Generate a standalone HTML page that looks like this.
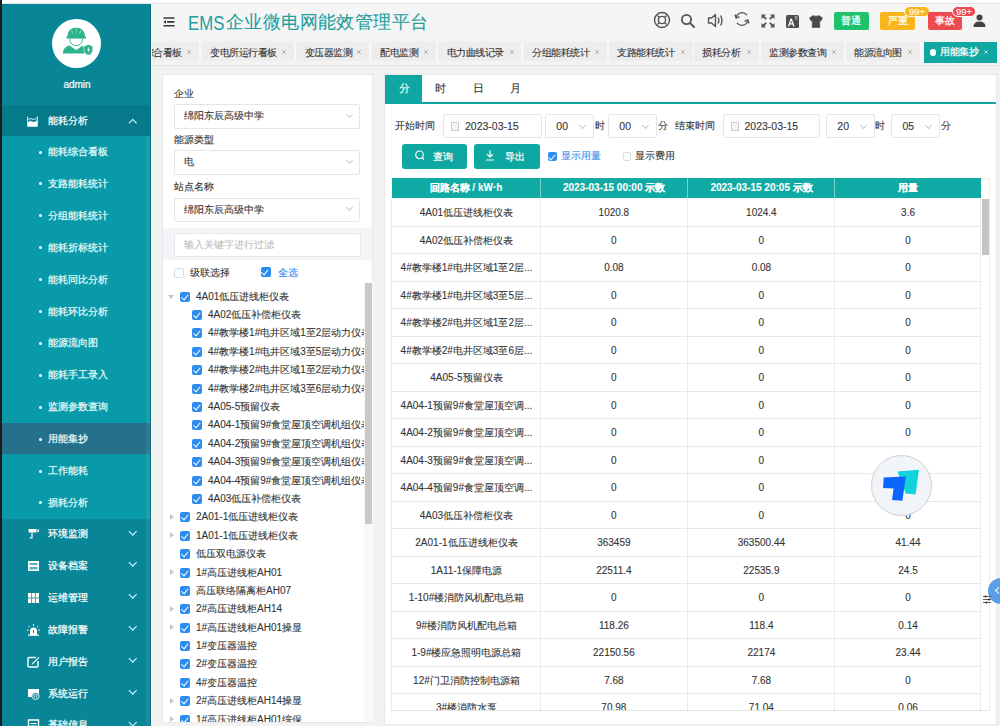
<!DOCTYPE html><html><head><meta charset="utf-8"><style>
*{box-sizing:border-box;margin:0;padding:0}
html,body{width:1000px;height:726px;overflow:hidden;background:#f2f2f2;font-family:"Liberation Sans",sans-serif;font-size:10px;color:#333}
.a{position:absolute}
.t{position:absolute;white-space:nowrap;line-height:12px;-webkit-text-stroke:0.1px currentColor}
.w{-webkit-text-stroke:0.22px currentColor}
#lstrip{left:0;top:0;width:2px;height:726px;background:#1d1d1d}
#top{left:2px;top:0;width:998px;height:4px;background:#fff;border-bottom:1px solid #e2e2e2}
#side{left:2px;top:4px;width:149px;height:722px;background:#088596;overflow:hidden}
.sb{position:absolute;left:0;width:149px}
.mi{color:#fff;font-size:10px;-webkit-text-stroke:0.22px currentColor}
.sub{color:#eafafa;font-size:10px;-webkit-text-stroke:0.22px currentColor}
.dot{position:absolute;width:3px;height:3px;border-radius:50%;background:#fff}
.chev{position:absolute;width:6px;height:6px;border-left:1.2px solid #dff;border-top:1.2px solid #dff}
#hdr{left:151px;top:4px;width:849px;height:34px;background:#f5f5f5}
#tabs{left:151px;top:38px;width:849px;height:28px;background:#f3f3f3;border-bottom:1px solid #e4e4e4}
.tab{position:absolute;top:4px;height:19px;background:#ededed;border-right:2px solid #f8f8f8;font-size:9.5px;color:#333;line-height:22px}
.x{position:absolute;top:0;font-size:8px;color:#999;line-height:22px}
#fp{left:162px;top:74px;width:211px;height:649px;background:#fff;border:1px solid #e8e8e8}
.lbl{font-size:10px;color:#333}
.sel{position:absolute;background:#fff;border:1px solid #e6e6e6;border-radius:2px}
.cb{position:absolute;width:10px;height:10px;border-radius:2px;background:#2d8cf0}
.cb:after{content:"";position:absolute;left:2.5px;top:1px;width:3px;height:5.5px;border-right:1.5px solid #fff;border-bottom:1.5px solid #fff;transform:rotate(40deg)}
.cbo{position:absolute;width:10px;height:10px;border-radius:2px;background:#fff;border:1px solid #dcdcdc}
.tr{font-size:10px;color:#333}
#rp{left:384px;top:74px;width:613px;height:650.5px;background:#fff;border:1px solid #e8e8e8}
.btn{position:absolute;background:#0ea7a1;border-radius:3px;color:#fff}
table{border-collapse:collapse}
</style></head><body><div id="lstrip" class="a"></div><div id="top" class="a"></div><div id="side" class="a"><div class="a" style="left:49.5px;top:14.5px;width:49px;height:49px;border-radius:50%;background:#fff"></div><svg class="a" style="left:0;top:0" width="149" height="100" viewBox="2 4 149 100"><path d="M67.2 37.2 Q67.5 27.8 76.2 27.4 Q84.8 27.8 85.2 37.2 Z" fill="#2db38c"/><path d="M66.5 36.6 H86 V38.6 H66.5 Z" fill="#2db38c"/><path d="M76.2 27.6 V33 M71.5 30 L73 34 M81 30 L79.5 34" stroke="#bfeedd" stroke-width="0.6"/><path d="M69.8 38.8 Q70 45.3 76.2 45.6 Q82.4 45.3 82.6 38.8" fill="none" stroke="#2db38c" stroke-width="0.9"/><path d="M62.8 53.4 Q63 47.2 69.5 45.6 L76.2 50 L82.5 45.8 Q84 46.5 84.2 48 L84.2 53.4 Z" fill="#2db38c"/><path d="M72 46.5 L76.2 49.5 L80.4 46.5" fill="none" stroke="#e9fbf3" stroke-width="0.7"/><path d="M83.8 46.2 L88.3 44.4 L92.8 46.2 V50 Q92.6 54 88.3 55.3 Q84 54 83.8 50 Z" fill="#2db38c" stroke="#fff" stroke-width="0.5"/><path d="M89 46.5 L87 50.2 L88.5 50.2 L87.6 53.5 L90 49.3 L88.6 49.3 Z" fill="#fff"/></svg><div class="t" style="left:0.5px;width:149px;top:73.5px;text-align:center;color:#fff;font-size:10px;line-height:14px;-webkit-text-stroke:0.2px #fff">admin</div><div class="sb" style="top:101px;height:31px;background:#06798b"></div><div class="sb" style="top:132px;height:382.5px;background:#089aa8"></div><div class="sb" style="top:419.2px;height:31.2px;background:#25708b"></div><div class="sb" style="top:514.5px;height:208px;background:#088596"></div><div class="a" style="left:144.2px;top:132px;width:3.6px;height:590px;background:rgba(255,255,255,0.07)"></div><div class="a" style="left:147.8px;top:0;width:1.2px;height:722px;background:#0a6e7c"></div><svg class="a" style="left:24.9px;top:111.9px" width="11" height="11" viewBox="0 0 11 11"><path d="M0.6 0.5 V10.4 H10.4 V0.5" fill="none" stroke="#cfeff2" stroke-width="1"/><path d="M1 4 Q3 1.5 5 3 T10 2" fill="none" stroke="#dff" stroke-width="0.9"/><path d="M1 10 V6.5 Q3 4.3 5.2 5.6 T10 4.6 V10 Z" fill="#fff"/></svg><div class="t mi" style="left:46px;top:111px">能耗分析</div><div class="chev" style="left:128px;top:116px;width:5.5px;height:5.5px;transform:rotate(45deg)"></div><div class="dot" style="left:36.5px;top:146.5px"></div><div class="t sub" style="left:46px;top:142.0px">能耗综合看板</div><div class="dot" style="left:36.5px;top:178.4px"></div><div class="t sub" style="left:46px;top:173.9px">支路能耗统计</div><div class="dot" style="left:36.5px;top:210.3px"></div><div class="t sub" style="left:46px;top:205.8px">分组能耗统计</div><div class="dot" style="left:36.5px;top:242.2px"></div><div class="t sub" style="left:46px;top:237.7px">能耗折标统计</div><div class="dot" style="left:36.5px;top:274.1px"></div><div class="t sub" style="left:46px;top:269.6px">能耗同比分析</div><div class="dot" style="left:36.5px;top:306.0px"></div><div class="t sub" style="left:46px;top:301.5px">能耗环比分析</div><div class="dot" style="left:36.5px;top:337.9px"></div><div class="t sub" style="left:46px;top:333.4px">能源流向图</div><div class="dot" style="left:36.5px;top:369.8px"></div><div class="t sub" style="left:46px;top:365.3px">能耗手工录入</div><div class="dot" style="left:36.5px;top:401.7px"></div><div class="t sub" style="left:46px;top:397.2px">监测参数查询</div><div class="dot" style="left:36.5px;top:433.6px"></div><div class="t sub" style="left:46px;top:429.1px">用能集抄</div><div class="dot" style="left:36.5px;top:465.5px"></div><div class="t sub" style="left:46px;top:461.0px">工作能耗</div><div class="dot" style="left:36.5px;top:497.4px"></div><div class="t sub" style="left:46px;top:492.9px">损耗分析</div><svg class="a" style="left:25px;top:524.0px" width="13" height="12" viewBox="0 0 13 12"><path d="M1.5 1 H9 V4.5 H1.5 Z" fill="#fff"/><path d="M10 1 V4.5 M11.5 1.5 V4" stroke="#fff" stroke-width="1"/><path d="M5 4.5 V9.5 M2.5 10 H5.5" stroke="#fff" stroke-width="1.2"/></svg><div class="t mi" style="left:46px;top:524.0px">环境监测</div><div class="chev" style="left:127.5px;top:524.5px;width:5.5px;height:5.5px;transform:rotate(225deg)"></div><svg class="a" style="left:25px;top:555.9px" width="13" height="12" viewBox="0 0 13 12"><path d="M1 1 H12 V11 H1 Z" fill="#fff"/><path d="M2.5 3 H10.5 V5 H2.5 Z M2.5 7 H10.5 V9.5 H2.5 Z" fill="#5bb3be"/></svg><div class="t mi" style="left:46px;top:555.9px">设备档案</div><div class="chev" style="left:127.5px;top:556.4px;width:5.5px;height:5.5px;transform:rotate(225deg)"></div><svg class="a" style="left:25px;top:587.8px" width="13" height="12" viewBox="0 0 13 12"><path d="M1 1 H12 V11 H1 Z" fill="#fff"/><path d="M4.6 1 V11 M8.4 1 V11 M1 6 H12" stroke="#3aa0ae" stroke-width="1"/></svg><div class="t mi" style="left:46px;top:587.8px">运维管理</div><div class="chev" style="left:127.5px;top:588.3px;width:5.5px;height:5.5px;transform:rotate(225deg)"></div><svg class="a" style="left:25px;top:619.7px" width="13" height="12" viewBox="0 0 13 12"><path d="M3 11 V7 Q3 3.5 6.5 3.5 Q10 3.5 10 7 V11 Z" fill="#fff"/><path d="M1 11.2 H12" stroke="#fff" stroke-width="1.2"/><path d="M6.5 0 V2 M1.5 2 L2.8 3.3 M11.5 2 L10.2 3.3 M0 6 H1.6 M11.4 6 H13" stroke="#fff" stroke-width="1"/><path d="M6.5 6 V9" stroke="#1a8896" stroke-width="1"/></svg><div class="t mi" style="left:46px;top:619.7px">故障报警</div><div class="chev" style="left:127.5px;top:620.2px;width:5.5px;height:5.5px;transform:rotate(225deg)"></div><svg class="a" style="left:25px;top:651.6px" width="13" height="12" viewBox="0 0 13 12"><path d="M9 1.5 H2 Q1 1.5 1 2.5 V10 Q1 11 2 11 H10 Q11 11 11 10 V5" fill="none" stroke="#fff" stroke-width="1.4"/><path d="M5 7.5 L11.5 1 L12.3 1.8 L5.8 8.3 L4.6 8.7 Z" fill="#fff"/></svg><div class="t mi" style="left:46px;top:651.6px">用户报告</div><div class="chev" style="left:127.5px;top:652.1px;width:5.5px;height:5.5px;transform:rotate(225deg)"></div><svg class="a" style="left:25px;top:683.5px" width="13" height="12" viewBox="0 0 13 12"><path d="M1 1 H12 V9 H1 Z" fill="#fff"/><circle cx="8.5" cy="8" r="3.6" fill="#2b9aa8" stroke="#e6fbff" stroke-width="0.8"/><path d="M6.8 8 A1.7 1.7 0 0 1 10.2 8 M7.6 9.5 V8.2 M9.4 9.5 V8" stroke="#fff" stroke-width="0.6" fill="none"/></svg><div class="t mi" style="left:46px;top:683.5px">系统运行</div><div class="chev" style="left:127.5px;top:684.0px;width:5.5px;height:5.5px;transform:rotate(225deg)"></div><svg class="a" style="left:25px;top:715.4px" width="13" height="12" viewBox="0 0 13 12"><path d="M1.5 1 H11.5 V11 H1.5 Z" fill="none" stroke="#fff" stroke-width="1.4"/><path d="M3.5 4.5 H9.5 M3.5 7 H9.5" stroke="#fff" stroke-width="1.2"/></svg><div class="t mi" style="left:46px;top:715.4px">基础信息</div><div class="chev" style="left:127.5px;top:715.9px;width:5.5px;height:5.5px;transform:rotate(225deg)"></div></div><div id="hdr" class="a"></div><div class="a" style="left:151px;top:4px;width:1px;height:722px;background:#fdfdfd;z-index:5"></div><svg class="a" style="left:163px;top:16.6px" width="12" height="10" viewBox="0 0 12 10"><path d="M0.5 1 H11.5 M4 4.9 H11.5 M0.5 8.8 H11.5" stroke="#3a3a3a" stroke-width="1.6"/><path d="M0.3 4.9 L3 3 L3 6.8 Z" fill="#3a3a3a"/></svg><div class="t" style="left:187.5px;top:11.5px;font-size:19.5px;line-height:22px;color:#239e9f;-webkit-text-stroke:0;transform:scaleX(0.86);transform-origin:0 0">EMS</div><div class="t" style="left:226px;top:10.5px;font-size:18px;line-height:22px;color:#239e9f;-webkit-text-stroke:0.1px currentColor;letter-spacing:0.4px">企业微电网能效管理平台</div><svg class="a" style="left:653px;top:11px" width="18" height="18" viewBox="0 0 18 18"><circle cx="9" cy="9" r="7.5" fill="none" stroke="#555" stroke-width="1.4"/><circle cx="9" cy="9" r="3.6" fill="none" stroke="#555" stroke-width="1.4"/><path d="M4.5 4.5 L6.4 6.4 M13.5 4.5 L11.6 6.4 M4.5 13.5 L6.4 11.6 M13.5 13.5 L11.6 11.6" stroke="#555" stroke-width="1.4"/></svg><svg class="a" style="left:680px;top:13px" width="16" height="16" viewBox="0 0 16 16"><circle cx="6.5" cy="6.5" r="4.6" fill="none" stroke="#555" stroke-width="1.8"/><path d="M10 10 L14 14" stroke="#555" stroke-width="2" stroke-linecap="round"/></svg><svg class="a" style="left:707px;top:13px" width="17" height="15" viewBox="0 0 17 15"><path d="M1.5 5 H4.5 L8.5 1.5 V13.5 L4.5 10 H1.5 Z" fill="none" stroke="#555" stroke-width="1.4" stroke-linejoin="round"/><path d="M11 4.5 Q12.8 7.5 11 10.5 M13.5 2.5 Q16.5 7.5 13.5 12.5" fill="none" stroke="#555" stroke-width="1.4"/></svg><svg class="a" style="left:734px;top:11px" width="16" height="16" viewBox="0 0 16 16"><path d="M2.2 6.5 A6 6 0 0 1 13 4.2" fill="none" stroke="#555" stroke-width="1.3"/><path d="M13.8 9.5 A6 6 0 0 1 3 11.8" fill="none" stroke="#555" stroke-width="1.3"/><path d="M1 3.5 L2.2 7.2 L5.5 5.6" fill="none" stroke="#555" stroke-width="1.3"/><path d="M15 12.5 L13.8 8.8 L10.5 10.4" fill="none" stroke="#555" stroke-width="1.3"/></svg><svg class="a" style="left:760.5px;top:14px" width="14" height="14" viewBox="0 0 14 14"><path d="M0.5 0.5 H5 L0.5 5 Z M13.5 0.5 V5 L9 0.5 Z M0.5 13.5 V9 L5 13.5 Z M13.5 13.5 H9 L13.5 9 Z" fill="#555"/><path d="M2 2 L5.2 5.2 M12 2 L8.8 5.2 M2 12 L5.2 8.8 M12 12 L8.8 8.8" stroke="#555" stroke-width="1.8"/></svg><svg class="a" style="left:786px;top:14.5px" width="13" height="13" viewBox="0 0 13 13"><rect x="0" y="0" width="13" height="13" rx="1.5" fill="#4d4d4d"/><path d="M1.8 11.5 L4.6 3.6 H5.8 L8.6 11.5 H7.2 L6.5 9.4 H3.9 L3.2 11.5 Z M4.3 8.2 H6.1 L5.2 5.4 Z" fill="#fff"/><path d="M8.6 1.8 H11.6 M10.1 1.2 V2.5 M8.9 4.8 Q10.2 3.8 11.4 2.4 M9.4 2.6 Q10.4 4.2 11.8 4.9" stroke="#ccc" stroke-width="0.7" fill="none"/></svg><svg class="a" style="left:809px;top:15px" width="14" height="13" viewBox="0 0 14 13"><path d="M4.3 0.5 Q7 2.2 9.7 0.5 L13.5 2.8 L12 6 L10.8 5.6 V12.5 H3.2 V5.6 L2 6 L0.5 2.8 Z" fill="#4a4a4a" stroke="#4a4a4a" stroke-width="0.6" stroke-linejoin="round"/></svg><div class="a" style="left:833.5px;top:11.7px;width:35px;height:18px;background:#1ec26b;border-radius:2px"></div><div class="t" style="left:833.5px;width:35px;text-align:center;top:14.5px;color:#fff;font-size:10px;-webkit-text-stroke:0.22px #fff">普通</div><div class="a" style="left:880.3px;top:11.7px;width:34.5px;height:18px;background:#f8b61c;border-radius:2px"></div><div class="t" style="left:880.3px;width:34.5px;text-align:center;top:14.5px;color:#fff;font-size:10px;-webkit-text-stroke:0.22px #fff">严重</div><div class="a" style="left:904px;top:5.8px;width:26px;height:11.5px;background:#f8b61c;border-radius:6px;border:1px solid #fff"></div><div class="t" style="left:904px;width:26px;text-align:center;top:5.8px;color:#fff;font-size:9.5px;line-height:11.5px">99+</div><div class="a" style="left:928px;top:11.7px;width:33.5px;height:18px;background:#ee4b4f;border-radius:2px"></div><div class="t" style="left:928px;width:33.5px;text-align:center;top:14.5px;color:#fff;font-size:10px;-webkit-text-stroke:0.22px #fff">事故</div><div class="a" style="left:951.8px;top:5.8px;width:24.5px;height:11.5px;background:#ee4b4f;border-radius:6px;border:1px solid #fff"></div><div class="t" style="left:951.8px;width:24.5px;text-align:center;top:5.8px;color:#fff;font-size:9.5px;line-height:11.5px">99+</div><svg class="a" style="left:973px;top:14px" width="13" height="13" viewBox="0 0 13 13"><circle cx="6.5" cy="3.5" r="3" fill="#444"/><path d="M0.5 13 Q0.5 7.5 6.5 7.5 Q12.5 7.5 12.5 13 Z" fill="#444"/></svg><div id="tabs" class="a"></div><div class="a" style="left:151px;top:38px;width:772.7px;height:28px;overflow:hidden"><div class="tab" style="left:-15.9px;width:66.0px"></div><div class="t" style="left:-7.4px;top:8.5px;font-size:10px;letter-spacing:-0.5px;color:#333">综合看板</div><svg class="a" style="left:36.1px;top:11.8px" width="4" height="4" viewBox="0 0 4 4"><path d="M0.3 0.3 L3.7 3.7 M3.7 0.3 L0.3 3.7" stroke="#9a9a9a" stroke-width="0.8"/></svg><div class="tab" style="left:50.5px;width:94.5px"></div><div class="t" style="left:59.0px;top:8.5px;font-size:10px;letter-spacing:-0.5px;color:#333">变电所运行看板</div><svg class="a" style="left:131.0px;top:11.8px" width="4" height="4" viewBox="0 0 4 4"><path d="M0.3 0.3 L3.7 3.7 M3.7 0.3 L0.3 3.7" stroke="#9a9a9a" stroke-width="0.8"/></svg><div class="tab" style="left:145.1px;width:74.9px"></div><div class="t" style="left:153.6px;top:8.5px;font-size:10px;letter-spacing:-0.5px;color:#333">变压器监测</div><svg class="a" style="left:206.0px;top:11.8px" width="4" height="4" viewBox="0 0 4 4"><path d="M0.3 0.3 L3.7 3.7 M3.7 0.3 L0.3 3.7" stroke="#9a9a9a" stroke-width="0.8"/></svg><div class="tab" style="left:220.9px;width:66.1px"></div><div class="t" style="left:229.4px;top:8.5px;font-size:10px;letter-spacing:-0.5px;color:#333">配电监测</div><svg class="a" style="left:273.0px;top:11.8px" width="4" height="4" viewBox="0 0 4 4"><path d="M0.3 0.3 L3.7 3.7 M3.7 0.3 L0.3 3.7" stroke="#9a9a9a" stroke-width="0.8"/></svg><div class="tab" style="left:287.4px;width:85.1px"></div><div class="t" style="left:295.9px;top:8.5px;font-size:10px;letter-spacing:-0.5px;color:#333">电力曲线记录</div><svg class="a" style="left:358.5px;top:11.8px" width="4" height="4" viewBox="0 0 4 4"><path d="M0.3 0.3 L3.7 3.7 M3.7 0.3 L0.3 3.7" stroke="#9a9a9a" stroke-width="0.8"/></svg><div class="tab" style="left:372.5px;width:85.5px"></div><div class="t" style="left:381.0px;top:8.5px;font-size:10px;letter-spacing:-0.5px;color:#333">分组能耗统计</div><svg class="a" style="left:444.0px;top:11.8px" width="4" height="4" viewBox="0 0 4 4"><path d="M0.3 0.3 L3.7 3.7 M3.7 0.3 L0.3 3.7" stroke="#9a9a9a" stroke-width="0.8"/></svg><div class="tab" style="left:457.5px;width:86.5px"></div><div class="t" style="left:466.0px;top:8.5px;font-size:10px;letter-spacing:-0.5px;color:#333">支路能耗统计</div><svg class="a" style="left:530.0px;top:11.8px" width="4" height="4" viewBox="0 0 4 4"><path d="M0.3 0.3 L3.7 3.7 M3.7 0.3 L0.3 3.7" stroke="#9a9a9a" stroke-width="0.8"/></svg><div class="tab" style="left:542.5px;width:67.0px"></div><div class="t" style="left:551.0px;top:8.5px;font-size:10px;letter-spacing:-0.5px;color:#333">损耗分析</div><svg class="a" style="left:595.5px;top:11.8px" width="4" height="4" viewBox="0 0 4 4"><path d="M0.3 0.3 L3.7 3.7 M3.7 0.3 L0.3 3.7" stroke="#9a9a9a" stroke-width="0.8"/></svg><div class="tab" style="left:609.5px;width:85.5px"></div><div class="t" style="left:618.0px;top:8.5px;font-size:10px;letter-spacing:-0.5px;color:#333">监测参数查询</div><svg class="a" style="left:681.0px;top:11.8px" width="4" height="4" viewBox="0 0 4 4"><path d="M0.3 0.3 L3.7 3.7 M3.7 0.3 L0.3 3.7" stroke="#9a9a9a" stroke-width="0.8"/></svg><div class="tab" style="left:694.5px;width:76.5px"></div><div class="t" style="left:703.0px;top:8.5px;font-size:10px;letter-spacing:-0.5px;color:#333">能源流向图</div><svg class="a" style="left:757.0px;top:11.8px" width="4" height="4" viewBox="0 0 4 4"><path d="M0.3 0.3 L3.7 3.7 M3.7 0.3 L0.3 3.7" stroke="#9a9a9a" stroke-width="0.8"/></svg></div><div class="a" style="left:923.7px;top:42px;width:73.1px;height:20.7px;background:#0ea7a1"></div><div class="a" style="left:930px;top:49px;width:6.3px;height:6.5px;border-radius:45%;background:#fff"></div><div class="t" style="left:940px;top:46px;color:#fff;font-size:10px;letter-spacing:-0.5px;-webkit-text-stroke:0.22px #fff">用能集抄</div><svg class="a" style="left:983.8px;top:49.8px" width="4" height="4" viewBox="0 0 4 4"><path d="M0.3 0.3 L3.7 3.7 M3.7 0.3 L0.3 3.7" stroke="#d8f2f2" stroke-width="0.8"/></svg><div id="fp" class="a"></div><div class="t lbl" style="left:173.7px;top:87.5px">企业</div><div class="sel" style="left:173.7px;top:103.5px;width:186px;height:25.3px"></div><div class="t" style="left:183.7px;top:110.2px;font-size:10px;color:#333">绵阳东辰高级中学</div><div class="chev" style="left:346.7px;top:111.7px;width:5px;height:5px;border-color:#c8c8c8;border-width:1px;transform:rotate(225deg)"></div><div class="t lbl" style="left:173.7px;top:134px">能源类型</div><div class="sel" style="left:173.7px;top:149.7px;width:186px;height:25.3px"></div><div class="t" style="left:183.7px;top:156.3px;font-size:10px;color:#333">电</div><div class="chev" style="left:346.7px;top:157.8px;width:5px;height:5px;border-color:#c8c8c8;border-width:1px;transform:rotate(225deg)"></div><div class="t lbl" style="left:173.7px;top:180.5px">站点名称</div><div class="sel" style="left:173.7px;top:197.5px;width:186px;height:24.2px"></div><div class="t" style="left:183.7px;top:203.6px;font-size:10px;color:#333">绵阳东辰高级中学</div><div class="chev" style="left:346.7px;top:205.1px;width:5px;height:5px;border-color:#c8c8c8;border-width:1px;transform:rotate(225deg)"></div><div class="a" style="left:163px;top:228.3px;width:209px;height:32px;background:#f4f5f9"></div><div class="a" style="left:173.7px;top:232.7px;width:187px;height:24.3px;background:#fff;border:1px solid #e8e8ec;border-radius:2px"></div><div class="t" style="left:184px;top:238.8px;color:#c0c0c0">输入关键字进行过滤</div><div class="cbo" style="left:173.7px;top:268px"></div><div class="t" style="left:190px;top:266.5px;color:#333">级联选择</div><div class="cb" style="left:260.6px;top:267px"></div><div class="t" style="left:278px;top:266.5px;color:#2d8cf0">全选</div><div class="a" style="left:163px;top:284px;width:201px;height:438px;overflow:hidden"><div class="a" style="left:5px;top:11.1px;width:0;height:0;border-left:3.5px solid transparent;border-right:3.5px solid transparent;border-top:4px solid #c0c4cc"></div><div class="cb" style="left:17.3px;top:7.6px"></div><div class="t tr" style="left:33px;top:6.6px">4A01低压进线柜仪表</div><div class="cb" style="left:29.4px;top:26.0px"></div><div class="t tr" style="left:45px;top:25.0px">4A02低压补偿柜仪表</div><div class="cb" style="left:29.4px;top:44.4px"></div><div class="t tr" style="left:45px;top:43.4px">4#教学楼1#电井区域1至2层动力仪表</div><div class="cb" style="left:29.4px;top:62.8px"></div><div class="t tr" style="left:45px;top:61.8px">4#教学楼1#电井区域3至5层动力仪表</div><div class="cb" style="left:29.4px;top:81.2px"></div><div class="t tr" style="left:45px;top:80.2px">4#教学楼2#电井区域1至2层动力仪表</div><div class="cb" style="left:29.4px;top:99.6px"></div><div class="t tr" style="left:45px;top:98.6px">4#教学楼2#电井区域3至6层动力仪表</div><div class="cb" style="left:29.4px;top:117.9px"></div><div class="t tr" style="left:45px;top:116.9px">4A05-5预留仪表</div><div class="cb" style="left:29.4px;top:136.3px"></div><div class="t tr" style="left:45px;top:135.3px">4A04-1预留9#食堂屋顶空调机组仪表</div><div class="cb" style="left:29.4px;top:154.7px"></div><div class="t tr" style="left:45px;top:153.7px">4A04-2预留9#食堂屋顶空调机组仪表</div><div class="cb" style="left:29.4px;top:173.1px"></div><div class="t tr" style="left:45px;top:172.1px">4A04-3预留9#食堂屋顶空调机组仪表</div><div class="cb" style="left:29.4px;top:191.5px"></div><div class="t tr" style="left:45px;top:190.5px">4A04-4预留9#食堂屋顶空调机组仪表</div><div class="cb" style="left:29.4px;top:209.9px"></div><div class="t tr" style="left:45px;top:208.9px">4A03低压补偿柜仪表</div><div class="a" style="left:6.5px;top:229.8px;width:0;height:0;border-top:3.5px solid transparent;border-bottom:3.5px solid transparent;border-left:4px solid #c0c4cc"></div><div class="cb" style="left:17.3px;top:228.3px"></div><div class="t tr" style="left:33px;top:227.3px">2A01-1低压进线柜仪表</div><div class="a" style="left:6.5px;top:248.2px;width:0;height:0;border-top:3.5px solid transparent;border-bottom:3.5px solid transparent;border-left:4px solid #c0c4cc"></div><div class="cb" style="left:17.3px;top:246.7px"></div><div class="t tr" style="left:33px;top:245.7px">1A01-1低压进线柜仪表</div><div class="cb" style="left:17.3px;top:265.1px"></div><div class="t tr" style="left:33px;top:264.1px">低压双电源仪表</div><div class="a" style="left:6.5px;top:285.0px;width:0;height:0;border-top:3.5px solid transparent;border-bottom:3.5px solid transparent;border-left:4px solid #c0c4cc"></div><div class="cb" style="left:17.3px;top:283.5px"></div><div class="t tr" style="left:33px;top:282.5px">1#高压进线柜AH01</div><div class="cb" style="left:17.3px;top:301.8px"></div><div class="t tr" style="left:33px;top:300.8px">高压联络隔离柜AH07</div><div class="a" style="left:6.5px;top:321.7px;width:0;height:0;border-top:3.5px solid transparent;border-bottom:3.5px solid transparent;border-left:4px solid #c0c4cc"></div><div class="cb" style="left:17.3px;top:320.2px"></div><div class="t tr" style="left:33px;top:319.2px">2#高压进线柜AH14</div><div class="a" style="left:6.5px;top:340.1px;width:0;height:0;border-top:3.5px solid transparent;border-bottom:3.5px solid transparent;border-left:4px solid #c0c4cc"></div><div class="cb" style="left:17.3px;top:338.6px"></div><div class="t tr" style="left:33px;top:337.6px">1#高压进线柜AH01操显</div><div class="cb" style="left:17.3px;top:357.0px"></div><div class="t tr" style="left:33px;top:356.0px">1#变压器温控</div><div class="cb" style="left:17.3px;top:375.4px"></div><div class="t tr" style="left:33px;top:374.4px">2#变压器温控</div><div class="cb" style="left:17.3px;top:393.8px"></div><div class="t tr" style="left:33px;top:392.8px">4#变压器温控</div><div class="a" style="left:6.5px;top:413.7px;width:0;height:0;border-top:3.5px solid transparent;border-bottom:3.5px solid transparent;border-left:4px solid #c0c4cc"></div><div class="cb" style="left:17.3px;top:412.2px"></div><div class="t tr" style="left:33px;top:411.2px">2#高压进线柜AH14操显</div><div class="a" style="left:6.5px;top:432.1px;width:0;height:0;border-top:3.5px solid transparent;border-bottom:3.5px solid transparent;border-left:4px solid #c0c4cc"></div><div class="cb" style="left:17.3px;top:430.6px"></div><div class="t tr" style="left:33px;top:429.6px">1#高压进线柜AH01综保</div></div><div class="a" style="left:364px;top:282px;width:8.5px;height:440px;background:#f8f8f8"></div><div class="a" style="left:364.5px;top:283px;width:7.5px;height:241px;background:#c8c8c8"></div><div id="rp" class="a"></div><div class="a" style="left:385px;top:102px;width:610.5px;height:2px;background:#0ea7a1"></div><div class="a" style="left:385px;top:75px;width:36.7px;height:27px;background:#0ea7a1"></div><div class="t" style="left:398.5px;top:81.5px;color:#fff;font-size:10.5px">分</div><div class="t" style="left:435.3px;top:81.5px;color:#333;font-size:10.5px">时</div><div class="t" style="left:473.3px;top:81.5px;color:#333;font-size:10.5px">日</div><div class="t" style="left:510.4px;top:81.5px;color:#333;font-size:10.5px">月</div><div class="t" style="left:394.7px;top:120px">开始时间</div><div class="sel" style="left:443px;top:114px;width:99px;height:24.2px"></div><div class="a" style="left:451px;top:121.5px;width:8px;height:9px;border:1px solid #ccc;background:#f4f4f4"></div><div class="t" style="left:465px;top:120px;font-size:10.5px">2023-03-15</div><div class="sel" style="left:544.8px;top:113.8px;width:49px;height:24.2px"></div><div class="t" style="left:556.3px;top:120px;font-size:10.5px">00</div><div class="chev" style="left:579.8px;top:122.5px;width:5px;height:5px;border-color:#c8c8c8;border-width:1px;transform:rotate(225deg)"></div><div class="t" style="left:595px;top:120px">时</div><div class="sel" style="left:607.8px;top:113.8px;width:49px;height:24.2px"></div><div class="t" style="left:619.3px;top:120px;font-size:10.5px">00</div><div class="chev" style="left:642.8px;top:122.5px;width:5px;height:5px;border-color:#c8c8c8;border-width:1px;transform:rotate(225deg)"></div><div class="t" style="left:657.7px;top:120px">分</div><div class="t" style="left:674.6px;top:120px">结束时间</div><div class="sel" style="left:722.5px;top:114px;width:97.7px;height:24.2px"></div><div class="a" style="left:730.5px;top:121.5px;width:8px;height:9px;border:1px solid #ccc;background:#f4f4f4"></div><div class="t" style="left:744.5px;top:120px;font-size:10.5px">2023-03-15</div><div class="sel" style="left:825.8px;top:113.8px;width:49px;height:24.2px"></div><div class="t" style="left:837.3px;top:120px;font-size:10.5px">20</div><div class="chev" style="left:860.8px;top:122.5px;width:5px;height:5px;border-color:#c8c8c8;border-width:1px;transform:rotate(225deg)"></div><div class="t" style="left:875px;top:120px">时</div><div class="sel" style="left:890.9px;top:113.8px;width:49px;height:24.2px"></div><div class="t" style="left:902.4px;top:120px;font-size:10.5px">05</div><div class="chev" style="left:925.9px;top:122.5px;width:5px;height:5px;border-color:#c8c8c8;border-width:1px;transform:rotate(225deg)"></div><div class="t" style="left:940.5px;top:120px">分</div><div class="btn" style="left:402px;top:143.9px;width:65px;height:25.2px"></div><svg class="a" style="left:415px;top:150px" width="10" height="11" viewBox="0 0 10 11"><circle cx="4.5" cy="4.8" r="3.8" fill="none" stroke="#fff" stroke-width="1.2"/><path d="M7.2 7.5 L9 9.5" stroke="#fff" stroke-width="1.2"/></svg><div class="t" style="left:432.7px;top:150.5px;color:#fff;-webkit-text-stroke:0.22px #fff">查询</div><div class="btn" style="left:474px;top:143.9px;width:65.7px;height:25.2px"></div><svg class="a" style="left:485px;top:150px" width="10" height="11" viewBox="0 0 10 11"><path d="M5 0.5 V7 M2 4.2 L5 7 L8 4.2 M1 10 H9" fill="none" stroke="#fff" stroke-width="1.2"/></svg><div class="t" style="left:505px;top:150.5px;color:#fff;-webkit-text-stroke:0.22px #fff">导出</div><div class="cb" style="left:547.7px;top:151.5px;width:9.5px;height:9.5px"></div><div class="t" style="left:561px;top:149.5px;color:#3590e6">显示用量</div><div class="cbo" style="left:622.5px;top:151.5px;width:8.5px;height:9px"></div><div class="t" style="left:635px;top:149.5px;color:#333">显示费用</div><div class="a" style="left:391.7px;top:178px;width:589.6px;height:20.4px;background:#0eaaa3"></div><div class="t" style="left:391.7px;width:148.5px;text-align:center;top:182.2px;color:#fff;font-weight:bold">回路名称 / kW·h</div><div class="t" style="left:540.2px;width:147.8px;text-align:center;top:182.2px;color:#fff;font-weight:bold">2023-03-15 00:00 示数</div><div class="a" style="left:540.3px;top:178px;width:1px;height:20.4px;background:rgba(255,255,255,.45)"></div><div class="t" style="left:688px;width:147.2px;text-align:center;top:182.2px;color:#fff;font-weight:bold">2023-03-15 20:05 示数</div><div class="a" style="left:687.3px;top:178px;width:1px;height:20.4px;background:rgba(255,255,255,.45)"></div><div class="t" style="left:835.2px;width:146.1px;text-align:center;top:182.2px;color:#fff;font-weight:bold">用量</div><div class="a" style="left:834.3px;top:178px;width:1px;height:20.4px;background:rgba(255,255,255,.45)"></div><div class="a" style="left:391.2px;top:198.4px;width:1px;height:511.6px;background:#ebebeb"></div><div class="a" style="left:391.7px;top:198.4px;width:588.6px;height:511.6px;overflow:hidden"><div class="a" style="left:0;top:27.40px;width:589.6px;height:1px;background:#e9e9e9"></div><div class="t" style="left:0.5px;width:148.5px;text-align:center;top:8.90px;color:#333">4A01低压进线柜仪表</div><div class="t" style="left:148.3px;width:147.8px;text-align:center;top:8.90px;color:#333">1020.8</div><div class="t" style="left:296.1px;width:147.2px;text-align:center;top:8.90px;color:#333">1024.4</div><div class="t" style="left:443.3px;width:146.1px;text-align:center;top:8.90px;color:#333">3.6</div><div class="a" style="left:0;top:54.90px;width:589.6px;height:1px;background:#e9e9e9"></div><div class="t" style="left:0.5px;width:148.5px;text-align:center;top:36.40px;color:#333">4A02低压补偿柜仪表</div><div class="t" style="left:148.3px;width:147.8px;text-align:center;top:36.40px;color:#333">0</div><div class="t" style="left:296.1px;width:147.2px;text-align:center;top:36.40px;color:#333">0</div><div class="t" style="left:443.3px;width:146.1px;text-align:center;top:36.40px;color:#333">0</div><div class="a" style="left:0;top:82.40px;width:589.6px;height:1px;background:#e9e9e9"></div><div class="t" style="left:0.5px;width:148.5px;text-align:center;top:63.90px;color:#333">4#教学楼1#电井区域1至2层...</div><div class="t" style="left:148.3px;width:147.8px;text-align:center;top:63.90px;color:#333">0.08</div><div class="t" style="left:296.1px;width:147.2px;text-align:center;top:63.90px;color:#333">0.08</div><div class="t" style="left:443.3px;width:146.1px;text-align:center;top:63.90px;color:#333">0</div><div class="a" style="left:0;top:109.90px;width:589.6px;height:1px;background:#e9e9e9"></div><div class="t" style="left:0.5px;width:148.5px;text-align:center;top:91.40px;color:#333">4#教学楼1#电井区域3至5层...</div><div class="t" style="left:148.3px;width:147.8px;text-align:center;top:91.40px;color:#333">0</div><div class="t" style="left:296.1px;width:147.2px;text-align:center;top:91.40px;color:#333">0</div><div class="t" style="left:443.3px;width:146.1px;text-align:center;top:91.40px;color:#333">0</div><div class="a" style="left:0;top:137.40px;width:589.6px;height:1px;background:#e9e9e9"></div><div class="t" style="left:0.5px;width:148.5px;text-align:center;top:118.90px;color:#333">4#教学楼2#电井区域1至2层...</div><div class="t" style="left:148.3px;width:147.8px;text-align:center;top:118.90px;color:#333">0</div><div class="t" style="left:296.1px;width:147.2px;text-align:center;top:118.90px;color:#333">0</div><div class="t" style="left:443.3px;width:146.1px;text-align:center;top:118.90px;color:#333">0</div><div class="a" style="left:0;top:164.90px;width:589.6px;height:1px;background:#e9e9e9"></div><div class="t" style="left:0.5px;width:148.5px;text-align:center;top:146.40px;color:#333">4#教学楼2#电井区域3至6层...</div><div class="t" style="left:148.3px;width:147.8px;text-align:center;top:146.40px;color:#333">0</div><div class="t" style="left:296.1px;width:147.2px;text-align:center;top:146.40px;color:#333">0</div><div class="t" style="left:443.3px;width:146.1px;text-align:center;top:146.40px;color:#333">0</div><div class="a" style="left:0;top:192.40px;width:589.6px;height:1px;background:#e9e9e9"></div><div class="t" style="left:0.5px;width:148.5px;text-align:center;top:173.90px;color:#333">4A05-5预留仪表</div><div class="t" style="left:148.3px;width:147.8px;text-align:center;top:173.90px;color:#333">0</div><div class="t" style="left:296.1px;width:147.2px;text-align:center;top:173.90px;color:#333">0</div><div class="t" style="left:443.3px;width:146.1px;text-align:center;top:173.90px;color:#333">0</div><div class="a" style="left:0;top:219.90px;width:589.6px;height:1px;background:#e9e9e9"></div><div class="t" style="left:0.5px;width:148.5px;text-align:center;top:201.40px;color:#333">4A04-1预留9#食堂屋顶空调...</div><div class="t" style="left:148.3px;width:147.8px;text-align:center;top:201.40px;color:#333">0</div><div class="t" style="left:296.1px;width:147.2px;text-align:center;top:201.40px;color:#333">0</div><div class="t" style="left:443.3px;width:146.1px;text-align:center;top:201.40px;color:#333">0</div><div class="a" style="left:0;top:247.40px;width:589.6px;height:1px;background:#e9e9e9"></div><div class="t" style="left:0.5px;width:148.5px;text-align:center;top:228.90px;color:#333">4A04-2预留9#食堂屋顶空调...</div><div class="t" style="left:148.3px;width:147.8px;text-align:center;top:228.90px;color:#333">0</div><div class="t" style="left:296.1px;width:147.2px;text-align:center;top:228.90px;color:#333">0</div><div class="t" style="left:443.3px;width:146.1px;text-align:center;top:228.90px;color:#333">0</div><div class="a" style="left:0;top:274.90px;width:589.6px;height:1px;background:#e9e9e9"></div><div class="t" style="left:0.5px;width:148.5px;text-align:center;top:256.40px;color:#333">4A04-3预留9#食堂屋顶空调...</div><div class="t" style="left:148.3px;width:147.8px;text-align:center;top:256.40px;color:#333">0</div><div class="t" style="left:296.1px;width:147.2px;text-align:center;top:256.40px;color:#333">0</div><div class="t" style="left:443.3px;width:146.1px;text-align:center;top:256.40px;color:#333">0</div><div class="a" style="left:0;top:302.40px;width:589.6px;height:1px;background:#e9e9e9"></div><div class="t" style="left:0.5px;width:148.5px;text-align:center;top:283.90px;color:#333">4A04-4预留9#食堂屋顶空调...</div><div class="t" style="left:148.3px;width:147.8px;text-align:center;top:283.90px;color:#333">0</div><div class="t" style="left:296.1px;width:147.2px;text-align:center;top:283.90px;color:#333">0</div><div class="t" style="left:443.3px;width:146.1px;text-align:center;top:283.90px;color:#333">0</div><div class="a" style="left:0;top:329.90px;width:589.6px;height:1px;background:#e9e9e9"></div><div class="t" style="left:0.5px;width:148.5px;text-align:center;top:311.40px;color:#333">4A03低压补偿柜仪表</div><div class="t" style="left:148.3px;width:147.8px;text-align:center;top:311.40px;color:#333">0</div><div class="t" style="left:296.1px;width:147.2px;text-align:center;top:311.40px;color:#333">0</div><div class="t" style="left:443.3px;width:146.1px;text-align:center;top:311.40px;color:#333">0</div><div class="a" style="left:0;top:357.40px;width:589.6px;height:1px;background:#e9e9e9"></div><div class="t" style="left:0.5px;width:148.5px;text-align:center;top:338.90px;color:#333">2A01-1低压进线柜仪表</div><div class="t" style="left:148.3px;width:147.8px;text-align:center;top:338.90px;color:#333">363459</div><div class="t" style="left:296.1px;width:147.2px;text-align:center;top:338.90px;color:#333">363500.44</div><div class="t" style="left:443.3px;width:146.1px;text-align:center;top:338.90px;color:#333">41.44</div><div class="a" style="left:0;top:384.90px;width:589.6px;height:1px;background:#e9e9e9"></div><div class="t" style="left:0.5px;width:148.5px;text-align:center;top:366.40px;color:#333">1A11-1保障电源</div><div class="t" style="left:148.3px;width:147.8px;text-align:center;top:366.40px;color:#333">22511.4</div><div class="t" style="left:296.1px;width:147.2px;text-align:center;top:366.40px;color:#333">22535.9</div><div class="t" style="left:443.3px;width:146.1px;text-align:center;top:366.40px;color:#333">24.5</div><div class="a" style="left:0;top:412.40px;width:589.6px;height:1px;background:#e9e9e9"></div><div class="t" style="left:0.5px;width:148.5px;text-align:center;top:393.90px;color:#333">1-10#楼消防风机配电总箱</div><div class="t" style="left:148.3px;width:147.8px;text-align:center;top:393.90px;color:#333">0</div><div class="t" style="left:296.1px;width:147.2px;text-align:center;top:393.90px;color:#333">0</div><div class="t" style="left:443.3px;width:146.1px;text-align:center;top:393.90px;color:#333">0</div><div class="a" style="left:0;top:439.90px;width:589.6px;height:1px;background:#e9e9e9"></div><div class="t" style="left:0.5px;width:148.5px;text-align:center;top:421.40px;color:#333">9#楼消防风机配电总箱</div><div class="t" style="left:148.3px;width:147.8px;text-align:center;top:421.40px;color:#333">118.26</div><div class="t" style="left:296.1px;width:147.2px;text-align:center;top:421.40px;color:#333">118.4</div><div class="t" style="left:443.3px;width:146.1px;text-align:center;top:421.40px;color:#333">0.14</div><div class="a" style="left:0;top:467.40px;width:589.6px;height:1px;background:#e9e9e9"></div><div class="t" style="left:0.5px;width:148.5px;text-align:center;top:448.90px;color:#333">1-9#楼应急照明电源总箱</div><div class="t" style="left:148.3px;width:147.8px;text-align:center;top:448.90px;color:#333">22150.56</div><div class="t" style="left:296.1px;width:147.2px;text-align:center;top:448.90px;color:#333">22174</div><div class="t" style="left:443.3px;width:146.1px;text-align:center;top:448.90px;color:#333">23.44</div><div class="a" style="left:0;top:494.90px;width:589.6px;height:1px;background:#e9e9e9"></div><div class="t" style="left:0.5px;width:148.5px;text-align:center;top:476.40px;color:#333">12#门卫消防控制电源箱</div><div class="t" style="left:148.3px;width:147.8px;text-align:center;top:476.40px;color:#333">7.68</div><div class="t" style="left:296.1px;width:147.2px;text-align:center;top:476.40px;color:#333">7.68</div><div class="t" style="left:443.3px;width:146.1px;text-align:center;top:476.40px;color:#333">0</div><div class="a" style="left:0;top:522.40px;width:589.6px;height:1px;background:#e9e9e9"></div><div class="t" style="left:0.5px;width:148.5px;text-align:center;top:503.90px;color:#333">3#楼消防水泵</div><div class="t" style="left:148.3px;width:147.8px;text-align:center;top:503.90px;color:#333">70.98</div><div class="t" style="left:296.1px;width:147.2px;text-align:center;top:503.90px;color:#333">71.04</div><div class="t" style="left:443.3px;width:146.1px;text-align:center;top:503.90px;color:#333">0.06</div><div class="a" style="left:148.6px;top:0;width:1px;height:512px;background:#ebebeb"></div><div class="a" style="left:295.6px;top:0;width:1px;height:512px;background:#ebebeb"></div><div class="a" style="left:442.6px;top:0;width:1px;height:512px;background:#ebebeb"></div></div><div class="a" style="left:391.2px;top:709.5px;width:599px;height:1px;background:#e4e4e4"></div><div class="a" style="left:980.3px;top:178px;width:9.7px;height:532px;background:#fff;border-left:1px solid #ebebeb;border-right:1px solid #ebebeb;border-top:1px solid #eee"></div><div class="a" style="left:980px;top:178px;width:1.3px;height:20.4px;background:#0eaaa3"></div><div class="a" style="left:981.5px;top:199.2px;width:7px;height:55.7px;background:#c4c4c4"></div><div class="a" style="left:870.5px;top:455px;width:61px;height:61px;border-radius:50%;background:#f1f5f9;border:1px solid #cfcfcf"></div><svg class="a" style="left:870px;top:455px" width="62" height="62" viewBox="870 455 62 62"><path d="M897.5 471.5 L919 469.8 L915.6 494.6 L905.7 493.5 Z" fill="#12d2dc"/><path d="M883.7 477.5 L905.8 476.4 L902.4 500.7 L892 500 L893.6 488.6 L883.1 488 Z" fill="#0a66ff"/></svg><div class="a" style="left:988px;top:578px;width:26px;height:26px;border-radius:50%;background:#5b9ee8"></div><div class="chev" style="left:996px;top:588px;width:5px;height:5px;border-color:#fff;border-width:1.5px;transform:rotate(-45deg)"></div><svg class="a" style="left:983px;top:595px" width="9" height="9" viewBox="0 0 9 9"><path d="M0 1.5 H8 M0 4.5 H8 M0 7.5 H8" stroke="#333" stroke-width="0.8"/><circle cx="2.5" cy="1.5" r="1" fill="#222"/><circle cx="6" cy="4.5" r="1" fill="#222"/><circle cx="3.5" cy="7.5" r="1" fill="#222"/></svg></body></html>
